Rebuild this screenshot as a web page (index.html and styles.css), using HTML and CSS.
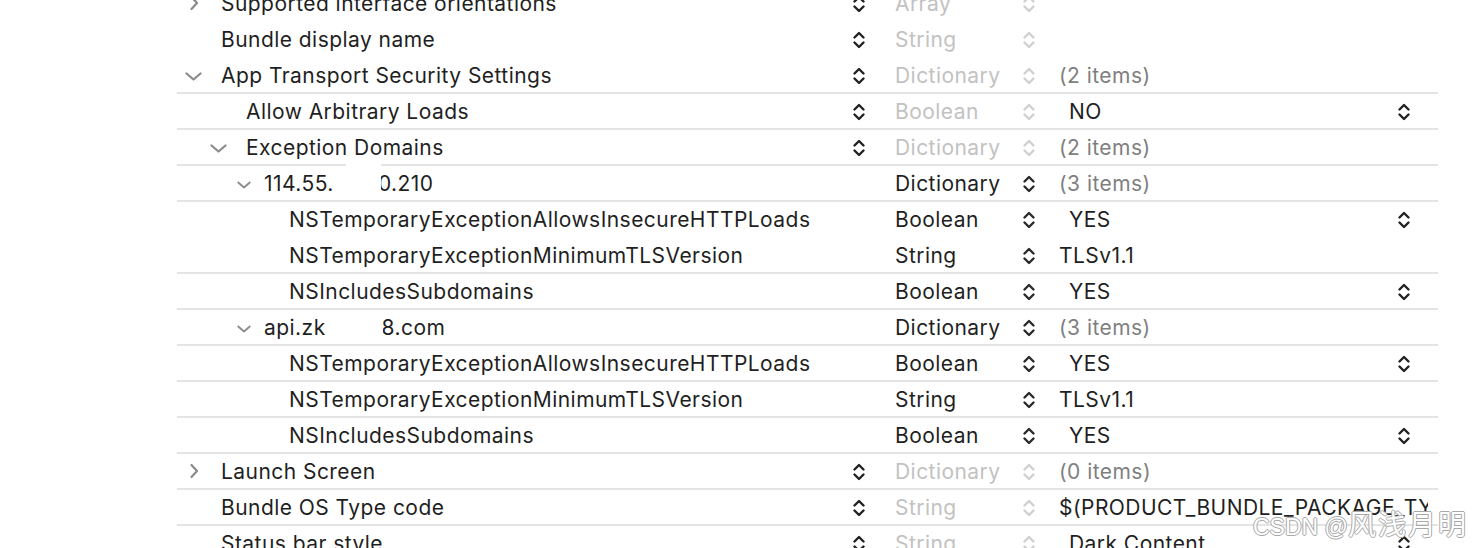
FILE: index.html
```html
<!DOCTYPE html>
<html lang="en">
<head>
<meta charset="utf-8">
<title>Info.plist</title>
<link rel="stylesheet" href="styles.css">
</head>
<body>
<svg width="0" height="0" class="defs" aria-hidden="true">
  <defs>
    <symbol id="step" viewBox="0 0 14 22">
      <path d="M2.5 8.5 L7 4 L11.5 8.5 M2.5 13.5 L7 18 L11.5 13.5" fill="none" stroke="currentColor" stroke-width="2.4" stroke-linecap="round" stroke-linejoin="round"/>
    </symbol>
    <symbol id="right" viewBox="0 0 10 16">
      <path d="M2.5 2 L8 8 L2.5 14" fill="none" stroke="currentColor" stroke-width="2.3" stroke-linecap="round" stroke-linejoin="round"/>
    </symbol>
    <symbol id="down" viewBox="0 0 17 9">
      <path d="M1.5 1.5 L8.5 7.5 L15.5 1.5" fill="none" stroke="currentColor" stroke-width="2.3" stroke-linecap="round" stroke-linejoin="round"/>
    </symbol>
  </defs>
</svg>

<div class="editor">
  <div class="list">

    <div class="row">
      <div class="key lv0"><span class="disc"><svg class="ic-right"><use href="#right"/></svg></span><span class="name">Supported interface orientations</span><svg class="kstep"><use href="#step"/></svg></div>
      <div class="type dim"><span>Array</span><svg class="tstep"><use href="#step"/></svg></div>
      <div class="val"></div>
    </div>

    <div class="row">
      <div class="key lv0"><span class="disc"></span><span class="name">Bundle display name</span><svg class="kstep"><use href="#step"/></svg></div>
      <div class="type dim"><span>String</span><svg class="tstep"><use href="#step"/></svg></div>
      <div class="val"></div>
    </div>

    <div class="row sep">
      <div class="key lv0"><span class="disc"><svg class="ic-down"><use href="#down"/></svg></span><span class="name">App Transport Security Settings</span><svg class="kstep"><use href="#step"/></svg></div>
      <div class="type dim"><span>Dictionary</span><svg class="tstep"><use href="#step"/></svg></div>
      <div class="val"><span class="count">(2 items)</span></div>
    </div>

    <div class="row sep">
      <div class="key lv1"><span class="disc"></span><span class="name">Allow Arbitrary Loads</span><svg class="kstep"><use href="#step"/></svg></div>
      <div class="type dim"><span>Boolean</span><svg class="tstep"><use href="#step"/></svg></div>
      <div class="val"><div class="popup"><span>NO</span><svg class="pstep"><use href="#step"/></svg></div></div>
    </div>

    <div class="row sep">
      <div class="key lv1"><span class="disc"><svg class="ic-down"><use href="#down"/></svg></span><span class="name">Exception Domains</span><svg class="kstep"><use href="#step"/></svg></div>
      <div class="type dim"><span>Dictionary</span><svg class="tstep"><use href="#step"/></svg></div>
      <div class="val"><span class="count">(2 items)</span></div>
    </div>

    <div class="row sep">
      <div class="key lv2"><span class="disc"><svg class="ic-down-sm"><use href="#down"/></svg></span><span class="name">114.55.<span class="redact r1"></span>0.210</span></div>
      <div class="type"><span>Dictionary</span><svg class="tstep"><use href="#step"/></svg></div>
      <div class="val"><span class="count">(3 items)</span></div>
    </div>

    <div class="row">
      <div class="key lv3"><span class="name">NSTemporaryExceptionAllowsInsecureHTTPLoads</span></div>
      <div class="type"><span>Boolean</span><svg class="tstep"><use href="#step"/></svg></div>
      <div class="val"><div class="popup"><span>YES</span><svg class="pstep"><use href="#step"/></svg></div></div>
    </div>

    <div class="row sep">
      <div class="key lv3"><span class="name">NSTemporaryExceptionMinimumTLSVersion</span></div>
      <div class="type"><span>String</span><svg class="tstep"><use href="#step"/></svg></div>
      <div class="val"><span class="text">TLSv1.1</span></div>
    </div>

    <div class="row sep">
      <div class="key lv3"><span class="name">NSIncludesSubdomains</span></div>
      <div class="type"><span>Boolean</span><svg class="tstep"><use href="#step"/></svg></div>
      <div class="val"><div class="popup"><span>YES</span><svg class="pstep"><use href="#step"/></svg></div></div>
    </div>

    <div class="row sep">
      <div class="key lv2"><span class="disc"><svg class="ic-down-sm"><use href="#down"/></svg></span><span class="name">api.zk<span class="redact r2"></span>8.com</span></div>
      <div class="type"><span>Dictionary</span><svg class="tstep"><use href="#step"/></svg></div>
      <div class="val"><span class="count">(3 items)</span></div>
    </div>

    <div class="row sep">
      <div class="key lv3"><span class="name">NSTemporaryExceptionAllowsInsecureHTTPLoads</span></div>
      <div class="type"><span>Boolean</span><svg class="tstep"><use href="#step"/></svg></div>
      <div class="val"><div class="popup"><span>YES</span><svg class="pstep"><use href="#step"/></svg></div></div>
    </div>

    <div class="row sep">
      <div class="key lv3"><span class="name">NSTemporaryExceptionMinimumTLSVersion</span></div>
      <div class="type"><span>String</span><svg class="tstep"><use href="#step"/></svg></div>
      <div class="val"><span class="text">TLSv1.1</span></div>
    </div>

    <div class="row sep">
      <div class="key lv3"><span class="name">NSIncludesSubdomains</span></div>
      <div class="type"><span>Boolean</span><svg class="tstep"><use href="#step"/></svg></div>
      <div class="val"><div class="popup"><span>YES</span><svg class="pstep"><use href="#step"/></svg></div></div>
    </div>

    <div class="row sep">
      <div class="key lv0"><span class="disc"><svg class="ic-right"><use href="#right"/></svg></span><span class="name">Launch Screen</span><svg class="kstep"><use href="#step"/></svg></div>
      <div class="type dim"><span>Dictionary</span><svg class="tstep"><use href="#step"/></svg></div>
      <div class="val"><span class="count">(0 items)</span></div>
    </div>

    <div class="row sep">
      <div class="key lv0"><span class="disc"></span><span class="name">Bundle OS Type code</span><svg class="kstep"><use href="#step"/></svg></div>
      <div class="type dim"><span>String</span><svg class="tstep"><use href="#step"/></svg></div>
      <div class="val"><span class="text clip">$(PRODUCT_BUNDLE_PACKAGE_TYPE)</span></div>
    </div>

    <div class="row">
      <div class="key lv0"><span class="disc"></span><span class="name">Status bar style</span><svg class="kstep"><use href="#step"/></svg></div>
      <div class="type dim"><span>String</span><svg class="tstep"><use href="#step"/></svg></div>
      <div class="val"><div class="popup"><span>Dark Content</span><svg class="pstep"><use href="#step"/></svg></div></div>
    </div>

  </div>
  <div class="watermark">CSDN @<span class="cjk">风浅月明</span></div>
</div>
</body>
</html>
```
FILE: styles.css
```css
* { box-sizing: border-box; }

html, body {
  margin: 0;
  padding: 0;
  background: #ffffff;
  overflow: hidden;
}

body {
  width: 1478px;
  height: 548px;
  font-family: "Inter", "Noto Sans", "Liberation Sans", sans-serif;
  font-size: 21px;
  letter-spacing: 0.45px;
  color: #1f1f1f;
}

.defs { position: absolute; }

.editor {
  position: relative;
  width: 1478px;
  height: 548px;
  overflow: hidden;
}

.list {
  margin-top: -14px;
  margin-left: 177px;
  width: 1261px;
  display: flex;
  flex-direction: column;
}

.row {
  height: 36px;
  display: grid;
  grid-template-columns: 706px 164px 391px;
  align-items: center;
  border-bottom: 2px solid transparent;
}

.row.sep { border-bottom-color: #e4e4e4; }

.key {
  position: relative;
  display: flex;
  align-items: center;
  height: 100%;
  padding-right: 17px;
}

.key.lv0 { padding-left: 8px; }
.key.lv1 { padding-left: 33px; }
.key.lv2 { padding-left: 60px; }
.key.lv3 { padding-left: 112px; }

.disc {
  width: 17px;
  margin-right: 19px;
  display: flex;
  justify-content: center;
  align-items: center;
  color: #8c8c8c;
  flex: none;
}

.lv2 .disc { width: 14px; margin-right: 13px; }

.ic-right { width: 10px; height: 16px; }
.ic-down { width: 17px; height: 9px; margin-top: 3px; }
.ic-down-sm { width: 14px; height: 8px; margin-top: 3px; }

.name {
  flex: 1;
  white-space: nowrap;
  position: relative;
}

.redact {
  display: inline-block;
  position: relative;
  vertical-align: top;
  height: 1em;
}
.redact::after {
  content: "";
  position: absolute;
  background: #ffffff;
}
.redact.r1 { width: 44px; }
.redact.r1::after { left: 12px; right: -3px; top: -14px; height: 42px; }
.redact.r2 { width: 56px; }
.redact.r2::after { left: 2px; right: -1px; top: -2px; height: 30px; }

.kstep, .tstep, .pstep {
  width: 14px;
  height: 22px;
  flex: none;
}

.kstep { color: #222222; margin-top: 2px; }

.type {
  display: flex;
  align-items: center;
  justify-content: space-between;
  padding-left: 12px;
  padding-right: 11px;
  height: 100%;
  color: #1f1f1f;
}
.type .tstep { color: #2a2a2a; margin-top: 2px; }

.type.dim { color: #c2c2c2; }
.type.dim .tstep { color: #d0d0d0; }

.val {
  display: flex;
  align-items: center;
  height: 100%;
  padding-left: 12px;
  padding-right: 10px;
  min-width: 0;
}

.count { color: #7f7f7f; }

.text { white-space: nowrap; }
.text.clip { overflow: hidden; display: block; width: 100%; }

.popup {
  flex: 1;
  display: flex;
  align-items: center;
  justify-content: space-between;
  margin-left: 10px;
  padding-right: 17px;
}
.popup .pstep { color: #222222; margin-top: 2px; }

.watermark {
  position: absolute;
  left: 1253px;
  top: 503px;
  font-family: "Liberation Sans", "Noto Sans CJK SC", sans-serif;
  font-size: 23px;
  letter-spacing: 0;
  color: #ffffff;
  white-space: nowrap;
  text-shadow: 1px 0 0 #a8a8a8, -1px 0 0 #a8a8a8, 0 1px 0 #a8a8a8, 0 -1px 0 #a8a8a8;
}
.watermark .cjk {
  font-family: "Noto Sans CJK SC", sans-serif;
  font-size: 28px;
  letter-spacing: 2px;
}
```
